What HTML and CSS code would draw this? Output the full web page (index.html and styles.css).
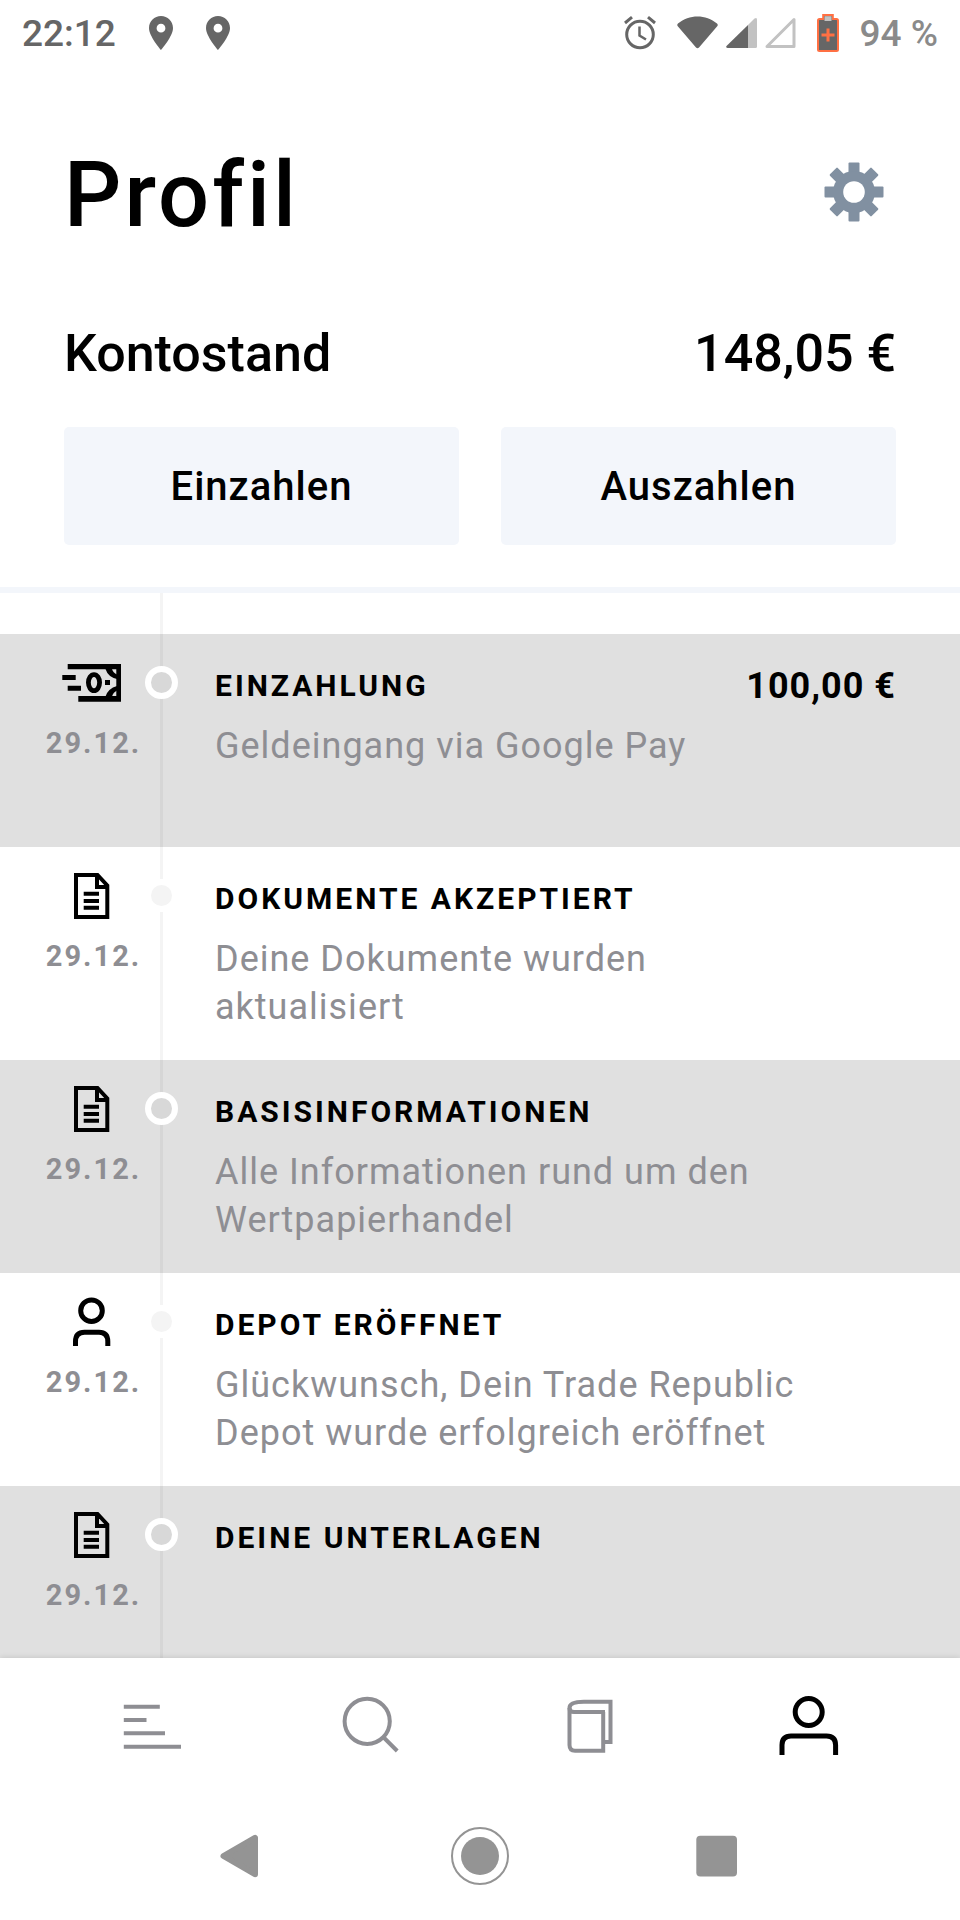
FILE: index.html
```html
<!DOCTYPE html>
<html lang="de">
<head>
    <meta charset="UTF-8">
    <meta name="viewport" content="width=device-width, initial-scale=1.0">
    <title>Profil</title>
    <link rel="stylesheet" href="styles.css">
</head>
<body>
    <!-- shared icons -->
    <svg class="sprite" aria-hidden="true">
        <symbol id="icon-pin" viewBox="0 0 24 34">
            <path fill="#666" fill-rule="evenodd" d="M12 0C5.400 0 0 5.300 0 12c0 8.500 12 22 12 22s12-13.500 12-22C24 5.300 18.600 0 12 0zm0 7.800a4.400 4.400 0 1 1 0 8.800 4.400 4.400 0 0 1 0-8.800z"/>
        </symbol>
        <symbol id="icon-document" viewBox="0 0 64 52">
            <path fill="none" stroke="#000" stroke-width="4" d="M17 4H38.500L48.300 14.500V46H17ZM38 5V16H48M24.700 22.700H40M24.700 30H40M24.700 36.700H40"/>
        </symbol>
        <symbol id="icon-person" viewBox="0 0 64 52">
            <g fill="none" stroke="#000" stroke-width="5">
                <circle cx="32.500" cy="13.700" r="10.800"/>
                <path d="M16.500 49V44.500Q16.500 35.200 25.500 35.200H40Q48.800 35.200 48.800 44.500V49"/>
            </g>
        </symbol>
    </svg>

    <div class="app">
        <div class="status-bar">
            <div class="status-left">
                <span class="clock">22:12</span>
                <svg width="24" height="34"><use href="#icon-pin"/></svg>
                <svg width="24" height="34"><use href="#icon-pin"/></svg>
            </div>
            <div class="status-right">
                <svg width="32" height="34" viewBox="0 0 32 34" fill="none" stroke="#666">
                    <circle cx="16" cy="18.500" r="13.300" stroke-width="3"/>
                    <path stroke-width="3" d="M1 7L8 1.200M31 7L24 1.200"/>
                    <path stroke-width="2.500" d="M15.500 10.500V19.500L22 23.500"/>
                </svg>
                <div class="signals">
                    <svg width="41" height="34" viewBox="0 0 41 34">
                        <path fill="#666" d="M1 7.500C12-2 29-2 40 7.500Q41.500 9 40 10.500L22 31.500Q20.500 33 19 31.500L1 10.500Q-.5 9 1 7.500Z"/>
                    </svg>
                    <svg width="31" height="34" viewBox="0 0 31 34">
                        <path fill="#c2c2c2" d="M22 9L28.500 2.500Q31 1 31 3.500V30.500Q31 32 29.500 32H22Z"/>
                        <path fill="#666" d="M22 9V32H1.500Q-1 31.500 1 29.500Z"/>
                    </svg>
                    <svg width="31" height="34" viewBox="0 0 31 34">
                        <path fill="none" stroke="#c2c2c2" stroke-width="3" stroke-linejoin="round" d="M29 3.500V30.500H2Z"/>
                    </svg>
                </div>
                <svg width="22" height="38" viewBox="0 0 22 38">
                    <path fill="#666" stroke="#ff7043" stroke-width="2" d="M1 6.500Q1 5 2.500 5H6.200V1H15.800V5H19.500Q21 5 21 6.500V35.500Q21 37 19.500 37H2.500Q1 37 1 35.500Z"/>
                    <path fill="#c2c2c2" d="M7.500 2.200H14.500V7H7.500Z"/>
                    <path stroke="#ff7043" stroke-width="3" d="M11 14.500V27.500M4.500 21H17.500"/>
                </svg>
                <span class="battery-level">94 %</span>
            </div>
        </div>

        <header class="profile">
            <div class="profile-title">
                <h1>Profil</h1>
                <button class="settings" type="button" aria-label="Einstellungen">
                    <svg width="60" height="60" viewBox="-30 -30 60 60" fill="#8190a1">
                        <g id="teeth">
                            <rect x="-5.500" y="-29.500" width="11" height="59" rx="1"/>
                            <rect x="-29.500" y="-5.500" width="59" height="11" rx="1"/>
                        </g>
                        <use href="#teeth" transform="rotate(45)"/>
                        <circle r="21"/>
                        <circle r="10.800" fill="#fff"/>
                    </svg>
                </button>
            </div>
            <div class="balance">
                <h2>Kontostand</h2>
                <span>148,05 €</span>
            </div>
            <div class="actions">
                <button type="button">Einzahlen</button>
                <button type="button">Auszahlen</button>
            </div>
        </header>

        <ul class="timeline">
            <li class="event event-shaded">
                <div class="event-date">
                    <svg width="64" height="52" viewBox="0 0 64 52">
                        <path d="M8.700 6H62V43.700H19.300V38H57.300V11.300H8.700ZM3.300 17H16.700V22H3.300ZM8.700 27.700H22V32.700H8.700ZM46 22H51V27H46Z"/>
                        <ellipse cx="35" cy="24.600" rx="5.600" ry="8" fill="none" stroke="#000" stroke-width="4.800"/>
                        <path d="M46.500 11H53Q54 14.500 58 16.500V21Q49 19 46.500 11ZM46.500 38.500H53Q54 34.500 58 32.500V28Q49 30.500 46.500 38.500Z"/>
                    </svg>
                    <time datetime="12-29">29.12.</time>
                </div>
                <span class="dot"></span>
                <div class="event-text">
                    <div class="event-head">
                        <h3>Einzahlung</h3>
                        <span class="amount">100,00 €</span>
                    </div>
                    <p>Geldeingang via Google Pay</p>
                </div>
            </li>
            <li class="event">
                <div class="event-date">
                    <svg width="64" height="52"><use href="#icon-document"/></svg>
                    <time datetime="12-29">29.12.</time>
                </div>
                <span class="dot"></span>
                <div class="event-text">
                    <h3>Dokumente akzeptiert</h3>
                    <p>Deine Dokumente wurden aktualisiert</p>
                </div>
            </li>
            <li class="event event-shaded">
                <div class="event-date">
                    <svg width="64" height="52"><use href="#icon-document"/></svg>
                    <time datetime="12-29">29.12.</time>
                </div>
                <span class="dot"></span>
                <div class="event-text">
                    <h3>Basisinformationen</h3>
                    <p>Alle Informationen rund um den Wertpapierhandel</p>
                </div>
            </li>
            <li class="event">
                <div class="event-date">
                    <svg width="64" height="52"><use href="#icon-person"/></svg>
                    <time datetime="12-29">29.12.</time>
                </div>
                <span class="dot"></span>
                <div class="event-text">
                    <h3>Depot eröffnet</h3>
                    <p>Glückwunsch, Dein Trade Republic Depot wurde erfolgreich eröffnet</p>
                </div>
            </li>
            <li class="event event-shaded">
                <div class="event-date">
                    <svg width="64" height="52"><use href="#icon-document"/></svg>
                    <time datetime="12-29">29.12.</time>
                </div>
                <span class="dot"></span>
                <div class="event-text">
                    <h3>Deine Unterlagen</h3>
                </div>
            </li>
        </ul>

        <nav class="tabs">
            <a href="#watchlist" aria-label="Übersicht">
                <svg width="64" height="64" viewBox="0 0 64 64" fill="none" stroke="#8e8e93" stroke-width="4">
                    <path d="M3.800 13.700H39.800M3.800 27H26.500M3.800 40.300H45M3.800 53.700H61"/>
                </svg>
            </a>
            <a href="#search" aria-label="Suche">
                <svg width="64" height="64" viewBox="0 0 64 64" fill="none" stroke="#8e8e93" stroke-width="4">
                    <circle cx="28.200" cy="28.300" r="22.600"/>
                    <path d="M44.200 44L58.200 58"/>
                </svg>
            </a>
            <a href="#orders" aria-label="Aufträge">
                <svg width="64" height="64" viewBox="0 0 64 64" fill="none" stroke="#8e8e93" stroke-width="4">
                    <path d="M47 19H16Q11.500 19 11.500 15C11.500 10 18 8.800 26 8.800H52.500V49H47"/>
                    <path d="M11.500 15V52Q11.500 57.700 17 57.700H45.200V19"/>
                </svg>
            </a>
            <a href="#profile" aria-label="Profil" aria-current="page">
                <svg width="64" height="64" viewBox="0 0 64 64" fill="none" stroke="#000" stroke-width="5">
                    <circle cx="31.700" cy="19" r="13.500"/>
                    <path d="M5 62V52Q5 42.900 14 42.900H49.500Q58.600 42.900 58.600 52V62"/>
                </svg>
            </a>
        </nav>

        <div class="system-bar">
            <button type="button" aria-label="Zurück">
                <svg width="64" height="64" viewBox="0 0 64 64">
                    <path fill="#949494" stroke="#949494" stroke-width="6" stroke-linejoin="round" d="M15.500 32L47 13.800V50.200Z"/>
                </svg>
            </button>
            <button type="button" aria-label="Startseite">
                <svg width="64" height="64" viewBox="0 0 64 64">
                    <circle cx="32" cy="32" r="28" fill="none" stroke="#949494" stroke-width="2"/>
                    <circle cx="32" cy="32" r="19" fill="#949494"/>
                </svg>
            </button>
            <button type="button" aria-label="Letzte Apps">
                <svg width="64" height="64" viewBox="0 0 64 64">
                    <rect x="8.300" y="11.700" width="40.700" height="40.700" rx="4" fill="#949494"/>
                </svg>
            </button>
        </div>
    </div>
</body>
</html>
```

FILE: styles.css
```css
* {
    box-sizing: border-box;
}

body {
    margin: 0;
    background-color: #fff;
    color: #000;
    font-family: Roboto, "Liberation Sans", sans-serif;
}

h1, h2, h3, p, ul {
    margin: 0;
    padding: 0;
}

h1, h2 {
    font-weight: 500;
}

button {
    border: none;
    background: none;
    padding: 0;
    color: inherit;
    font-family: inherit;
}

svg {
    display: block;
    flex-shrink: 0;
}

.sprite {
    position: absolute;
    width: 0;
    height: 0;
}

.app {
    display: flex;
    flex-direction: column;
    height: 100vh;
}

/* status bar */
.status-bar {
    display: flex;
    justify-content: space-between;
    align-items: center;
    height: 66px;
    padding: 0 22px;
    font-size: 37px;
    flex-shrink: 0;
}

.status-left {
    display: flex;
    align-items: center;
    gap: 33px;
}

.status-right {
    display: flex;
    align-items: center;
    gap: 21px;
}

.signals {
    display: flex;
    gap: 8px;
}

.clock {
    color: #666;
    font-weight: 500;
}

.battery-level {
    color: #8a8a8a;
    font-weight: 500;
}

/* profile header */
.profile {
    flex-shrink: 0;
    padding: 74px 64px 42px;
    border-bottom: 6px solid #f3f6fb;
}

.profile-title {
    display: flex;
    justify-content: space-between;
    align-items: flex-start;
}

.profile-title h1 {
    font-size: 90px;
    line-height: 112px;
    letter-spacing: 3px;
}

.settings {
    padding: 22px 12px;
}

.balance {
    display: flex;
    justify-content: space-between;
    margin-top: 70px;
    font-size: 52px;
    font-weight: 500;
    line-height: 64px;
}

.balance h2 {
    font-size: inherit;
}

.actions {
    display: grid;
    grid-template-columns: 1fr 1fr;
    gap: 42px;
    margin-top: 41px;
}

.actions button {
    height: 118px;
    border-radius: 5px;
    background-color: #f3f6fb;
    font-size: 40px;
    font-weight: 500;
    letter-spacing: 1px;
}

/* timeline */
.timeline {
    flex: 1;
    min-height: 0;
    overflow: hidden;
    padding-top: 41px;
    list-style: none;
    background: linear-gradient(#f4f4f4, #f4f4f4) 160px 0 / 3px 100% no-repeat;
}

.event {
    display: grid;
    grid-template-columns: 108px 33px 1fr;
    align-items: start;
    min-height: 213px;
    padding: 0 64px 29px 37px;
}

.event-shaded {
    background-color: rgba(0, 0, 0, 0.12);
}

.event-date {
    display: flex;
    flex-direction: column;
    align-items: center;
    gap: 15px;
    padding-top: 24px;
    color: #8e8e93;
    font-size: 29px;
    font-weight: bold;
    line-height: 36px;
    letter-spacing: 2px;
}

.event-date time {
    padding-left: 5px;
}

.dot {
    height: 33px;
    margin-top: 32px;
    border: 6px solid #fff;
    border-radius: 50%;
    background-color: #f4f4f4;
}

.event-shaded .dot {
    background-color: #d8d8d8;
}

.event-text {
    padding: 34px 0 0 37px;
}

.event-head {
    display: flex;
    justify-content: space-between;
    align-items: flex-start;
}

.event-text h3 {
    font-size: 30px;
    font-weight: bold;
    line-height: 36px;
    letter-spacing: 3px;
    text-transform: uppercase;
}

.amount {
    font-size: 36px;
    font-weight: bold;
    line-height: 36px;
    letter-spacing: 1px;
}

.event-text p {
    max-width: 616px;
    margin-top: 18px;
    color: #8e8e93;
    font-size: 36px;
    line-height: 48px;
    letter-spacing: 1px;
}

/* bottom navigation */
.tabs {
    display: grid;
    grid-template-columns: repeat(4, 1fr);
    justify-items: center;
    flex-shrink: 0;
    padding: 35px 42px 32px;
    background-color: #fff;
    box-shadow: 0 -1px 5px rgba(0, 0, 0, 0.1);
}

.system-bar {
    display: grid;
    grid-template-columns: repeat(3, 1fr);
    justify-items: center;
    flex-shrink: 0;
    padding: 35px 120px 32px;
    background-color: #fff;
    /* keeps the tab shadow from showing below the tabs */
    z-index: 1;
}
```
